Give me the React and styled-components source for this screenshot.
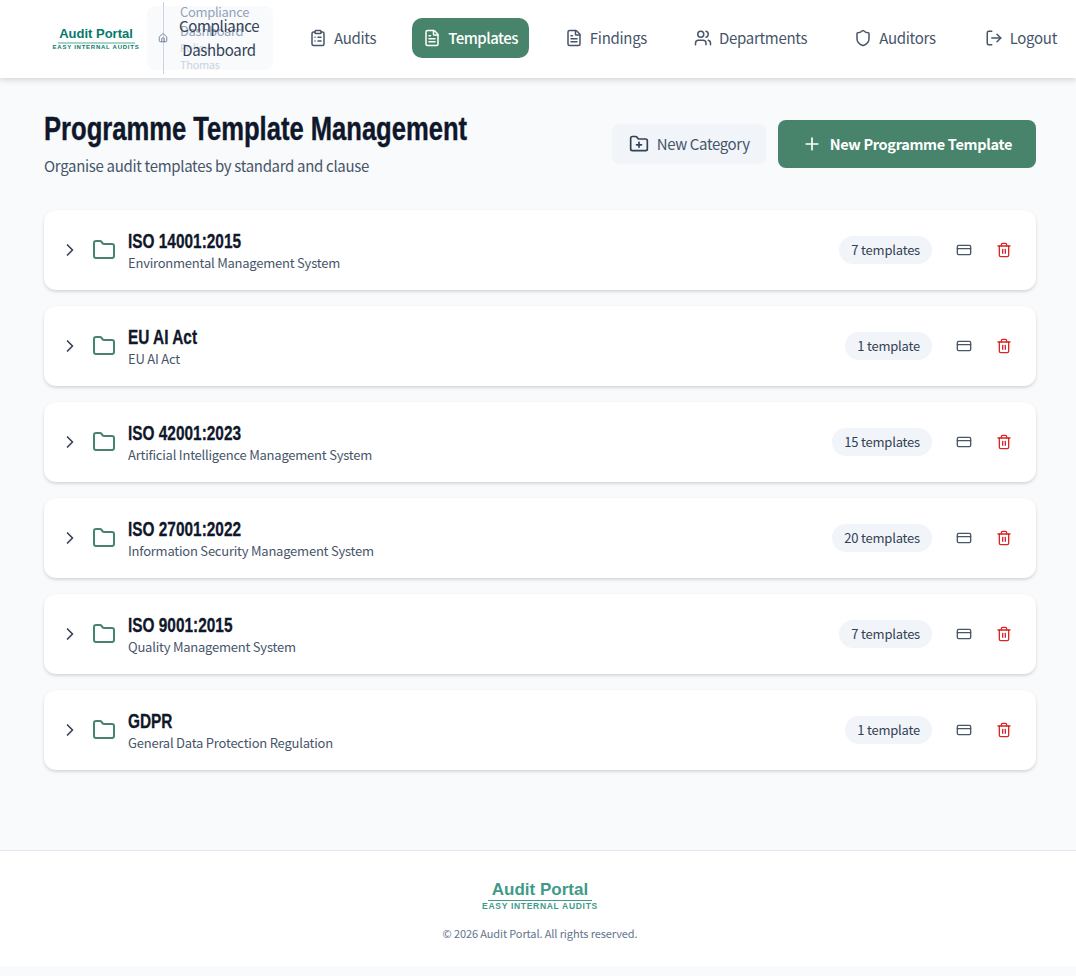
import React from 'react';
import styled, { createGlobalStyle } from 'styled-components';
import {
  ChevronRight,
  ClipboardList,
  CreditCard,
  FileText,
  Folder,
  FolderPlus,
  House,
  LogOut,
  Plus,
  Shield,
  Trash2,
  Users,
} from 'lucide-react';

const categories = [
  { name: 'ISO 14001:2015', description: 'Environmental Management System', count: '7 templates' },
  { name: 'EU AI Act', description: 'EU AI Act', count: '1 template' },
  { name: 'ISO 42001:2023', description: 'Artificial Intelligence Management System', count: '15 templates' },
  { name: 'ISO 27001:2022', description: 'Information Security Management System', count: '20 templates' },
  { name: 'ISO 9001:2015', description: 'Quality Management System', count: '7 templates' },
  { name: 'GDPR', description: 'General Data Protection Regulation', count: '1 template' },
];

const navItems = [
  { label: 'Audits', Icon: ClipboardList },
  { label: 'Templates', Icon: FileText, active: true },
  { label: 'Findings', Icon: FileText },
  { label: 'Departments', Icon: Users },
  { label: 'Auditors', Icon: Shield },
  { label: 'Logout', Icon: LogOut },
];

const App = () => (
  <>
    <GlobalStyle />
    <Header>
      <LogoBlock>
        <LogoTitle>Audit Portal</LogoTitle>
        <LogoTag>EASY INTERNAL AUDITS</LogoTag>
      </LogoBlock>
      <Breadcrumb>
        <BreadcrumbRule />
        <HomeIcon><House size={10} /></HomeIcon>
        <GhostTitle>Compliance Dashboard</GhostTitle>
        <GhostUser>Policy<br />Thomas</GhostUser>
        <BreadcrumbTitle>Compliance Dashboard</BreadcrumbTitle>
      </Breadcrumb>
      <Nav>
        {navItems.map(({ label, Icon, active }) => (
          <NavItem key={label} $active={active}>
            <Icon size={18} />
            <Label>{label}</Label>
          </NavItem>
        ))}
      </Nav>
    </Header>
    <Main>
      <PageHead>
        <div>
          <PageTitle><span>Programme Template Management</span></PageTitle>
          <PageSub>Organise audit templates by standard and clause</PageSub>
        </div>
        <Actions>
          <SecondaryButton><FolderPlus size={20} /><Label>New Category</Label></SecondaryButton>
          <PrimaryButton><Plus size={20} /><Label>New Programme Template</Label></PrimaryButton>
        </Actions>
      </PageHead>
      <CardList>
        {categories.map(cat => (
          <Card key={cat.name}>
            <Chevron><ChevronRight size={20} /></Chevron>
            <FolderIcon><Folder size={24} /></FolderIcon>
            <CardText>
              <CardName><span>{cat.name}</span></CardName>
              <CardDesc>{cat.description}</CardDesc>
            </CardText>
            <Count>{cat.count}</Count>
            <IconButton><CreditCard size={16} /></IconButton>
            <IconButton $danger><Trash2 size={16} /></IconButton>
          </Card>
        ))}
      </CardList>
    </Main>
    <Footer>
      <FooterLogo>Audit Portal</FooterLogo>
      <FooterTag>EASY INTERNAL AUDITS</FooterTag>
      <Copyright>© 2026 Audit Portal. All rights reserved.</Copyright>
    </Footer>
  </>
);

export default App;

const GlobalStyle = createGlobalStyle`
  * {
    box-sizing: border-box;
  }

  body {
    margin: 0;
    min-height: 976px;
    background: #f8fafc;
    color: #0f172a;
    font-family: "Noto Sans CJK SC", "Noto Sans", sans-serif;
    letter-spacing: -0.02em;
  }
`;

const Label = styled.span`
  margin-bottom: 2px;
`;

const Header = styled.header`
  display: flex;
  align-items: center;
  height: 78px;
  padding: 0 0 2px 52px;
  background: #fff;
  box-shadow: 0 2px 6px rgba(15, 23, 42, 0.16);
`;

const LogoBlock = styled.div`
  display: flex;
  flex-direction: column;
  align-items: center;
  width: 88px;
  margin-right: 7px;
  padding-top: 1px;
  font-family: "Liberation Sans", Arial, sans-serif;
  letter-spacing: 0;
`;

const LogoTitle = styled.div`
  width: 77px;
  padding-bottom: 1px;
  border-bottom: 2px solid #a9d3c4;
  color: #057a6c;
  font-size: 13px;
  font-weight: 700;
  line-height: 15px;
  text-align: center;
  white-space: nowrap;
`;

const LogoTag = styled.div`
  color: #057a6c;
  font-size: 6px;
  font-weight: 700;
  letter-spacing: 0.75px;
  line-height: 7px;
  white-space: nowrap;
`;

const Breadcrumb = styled.div`
  position: relative;
  width: 126px;
  height: 64px;
  border-radius: 8px;
  background: #f8fafc;
`;

const BreadcrumbRule = styled.span`
  position: absolute;
  left: 16px;
  top: -4px;
  width: 1px;
  height: 72px;
  background: #cbd5e1;
`;

const HomeIcon = styled.span`
  position: absolute;
  left: 11px;
  top: 27px;
  display: flex;
  color: #64748b;
`;

const GhostTitle = styled.span`
  position: absolute;
  left: 33px;
  top: -4px;
  width: 76px;
  color: #94a3b8;
  font-size: 13px;
  line-height: 19px;
`;

const GhostUser = styled.span`
  position: absolute;
  left: 33px;
  top: 33px;
  color: #cbd5e1;
  font-size: 11px;
  line-height: 17px;
`;

const BreadcrumbTitle = styled.span`
  position: absolute;
  left: 32px;
  top: 8px;
  width: 80px;
  color: #334155;
  font-size: 15px;
  line-height: 24px;
  text-align: center;
`;

const Nav = styled.nav`
  display: flex;
  flex: 1;
  align-items: center;
  gap: 25px;
  padding: 0 8px 0 25px;
`;

const NavItem = styled.a`
  display: flex;
  align-items: center;
  gap: 7px;
  height: 40px;
  padding: 0 11px;
  border-radius: 10px;
  background: ${props => (props.$active ? '#47846b' : 'transparent')};
  color: ${props => (props.$active ? '#fff' : '#475569')};
  font-size: 15px;
  font-weight: ${props => (props.$active ? 500 : 400)};
  letter-spacing: ${props => (props.$active ? '-0.035em' : '-0.02em')};

  &:last-child {
    margin-left: auto;
  }
`;

const Main = styled.main`
  height: 773px;
  padding: 31px 40px 0 44px;
  border-bottom: 1px solid #e2e8f0;
`;

const PageHead = styled.div`
  display: flex;
  align-items: flex-start;
  justify-content: space-between;
  margin-bottom: 34px;
`;

const PageTitle = styled.h1`
  width: 423px;
  height: 40px;
  margin: 0;
  color: #0f172a;
  font-family: "Liberation Sans", Arial, sans-serif;
  font-size: 33px;
  font-weight: 700;
  letter-spacing: 0;
  line-height: 40px;
  white-space: nowrap;

  span {
    display: inline-block;
    transform: scaleX(0.775);
    transform-origin: left center;
    -webkit-text-stroke: 0.4px #0f172a;
  }
`;

const PageSub = styled.p`
  margin: 7px 0 0;
  color: #475569;
  font-size: 15px;
  line-height: 20px;
`;

const Actions = styled.div`
  display: flex;
  align-items: center;
  gap: 12px;
  margin-top: 11px;
`;

const SecondaryButton = styled.button`
  display: flex;
  align-items: center;
  gap: 8px;
  height: 40px;
  padding: 0 16px 0 17px;
  border: 0;
  border-radius: 8px;
  background: #f1f5f9;
  color: #475569;
  font: inherit;
  font-size: 15px;
  letter-spacing: -0.025em;

  svg {
    color: #334155;
  }
`;

const PrimaryButton = styled.button`
  display: flex;
  align-items: center;
  gap: 8px;
  height: 48px;
  padding: 0 24px;
  border: 0;
  border-radius: 8px;
  background: #47846b;
  color: #fff;
  font: inherit;
  font-size: 14.5px;
  font-weight: 700;
  letter-spacing: inherit;
`;

const CardList = styled.div`
  display: flex;
  flex-direction: column;
  gap: 16px;
`;

const Card = styled.div`
  display: flex;
  align-items: center;
  height: 80px;
  padding: 0 16px;
  border-radius: 12px;
  background: #fff;
  box-shadow: 0 2px 4px -1px rgba(15, 23, 42, 0.16), 0 1px 3px rgba(15, 23, 42, 0.06);
`;

const Chevron = styled.span`
  display: flex;
  margin-right: 13px;
  color: #334155;
`;

const FolderIcon = styled.span`
  display: flex;
  margin-right: 12px;
  margin-left: -1px;
  color: #47846b;
`;

const CardText = styled.div`
  flex: 1;
  margin-bottom: 2px;
`;

const CardName = styled.div`
  height: 28px;
  color: #0f172a;
  font-family: "Liberation Sans", Arial, sans-serif;
  font-size: 20px;
  font-weight: 700;
  letter-spacing: 0;
  line-height: 28px;
  white-space: nowrap;

  span {
    display: inline-block;
    transform: scaleX(0.77);
    transform-origin: left center;
    -webkit-text-stroke: 0.3px #0f172a;
  }
`;

const CardDesc = styled.div`
  margin-top: -1px;
  color: #475569;
  font-size: 13px;
  letter-spacing: -0.0175em;
  line-height: 17px;
`;

const Count = styled.span`
  height: 28px;
  margin-right: 16px;
  padding: 0 12px;
  border-radius: 14px;
  background: #f1f5f9;
  color: #334155;
  font-size: 13px;
  letter-spacing: -0.016em;
  line-height: 27px;
`;

const IconButton = styled.span`
  display: flex;
  justify-content: center;
  width: 32px;
  margin-left: ${props => (props.$danger ? '8px' : '0')};
  color: ${props => (props.$danger ? '#dc2626' : '#475569')};
`;

const Footer = styled.footer`
  display: flex;
  flex-direction: column;
  align-items: center;
  height: 115px;
  padding: 29px 0 0 4px;
  background: #fff;
`;

const FooterLogo = styled.div`
  padding: 0 4px 1px;
  border-bottom: 1px solid #3f9a88;
  color: #3f9a88;
  font-family: "Liberation Sans", Arial, sans-serif;
  font-size: 17px;
  font-weight: 700;
  letter-spacing: 0;
  line-height: 19px;
`;

const FooterTag = styled.div`
  color: #3f9a88;
  font-family: "Liberation Sans", Arial, sans-serif;
  font-size: 8.5px;
  font-weight: 700;
  letter-spacing: 0.7px;
  line-height: 11px;
`;

const Copyright = styled.div`
  margin-top: 13px;
  color: #64748b;
  font-size: 11px;
  letter-spacing: -0.01em;
  line-height: 16px;
`;
